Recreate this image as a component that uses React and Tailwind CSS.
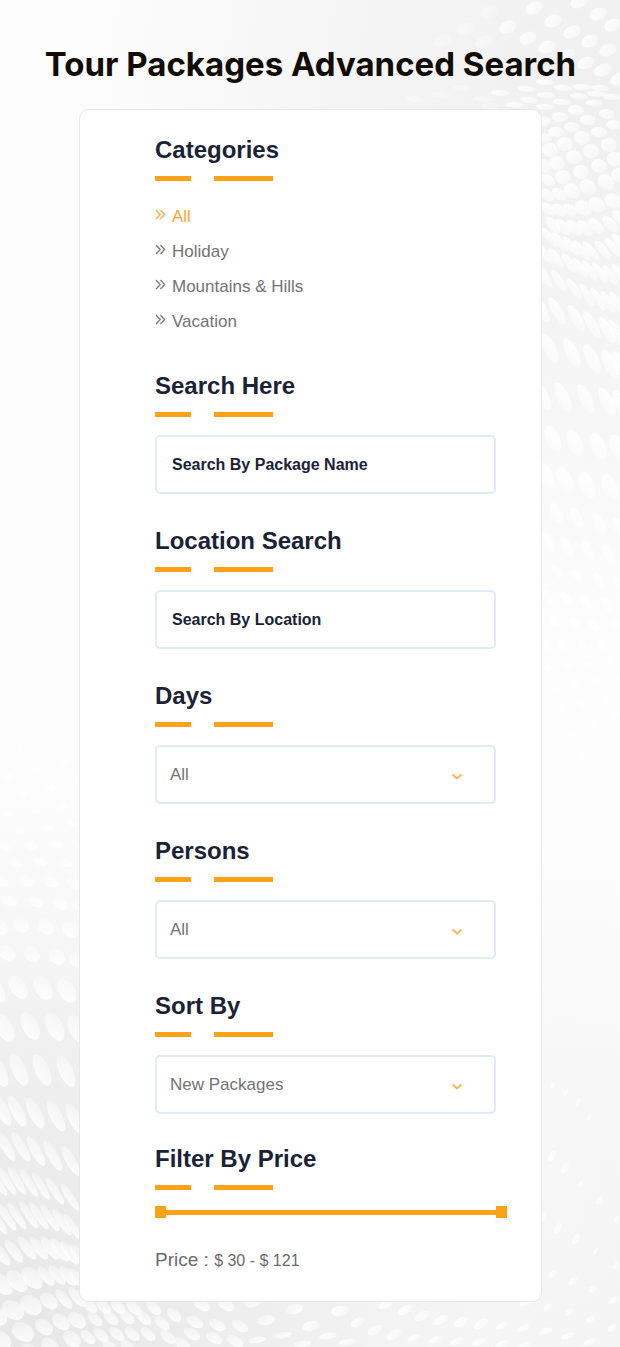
import { useState } from "react";

// each group shares one ellipse shape: rx, ry, rotation, then its points
const DOTS = [
  { rx: 9, ry: 6, rot: -22, points: [[534, 8], [579, 2], [598, 14], [613, 25], [553, 21], [572, 32], [590, 41], [608, 50], [508, 27], [528, 38], [547, 47], [567, 55], [586, 63], [603, 70], [619, 79], [489, 12], [465, 29], [484, 42], [442, 41]] },
  { rx: 9, ry: 3, rot: 4, points: [[545, 82], [563, 88], [582, 87], [600, 88], [527, 89], [546, 95], [579, 96], [596, 94], [612, 97], [529, 100], [562, 102], [594, 103], [515, 105], [545, 107], [500, 93], [482, 99], [462, 88], [440, 95], [415, 99], [490, 106]] },
  { rx: 8, ry: 5, rot: 5, points: [[576, 110], [607, 114], [560, 117], [588, 120], [572, 127], [614, 125], [556, 132], [599, 132], [543, 121], [544, 138]] },
  { rx: 8, ry: 7, rot: 15, points: [[550, 150], [565, 144], [582, 138], [609, 145], [591, 151], [574, 157], [557, 163], [599, 166], [615, 159], [581, 172], [563, 177], [543, 166], [619, 175]] },
  { rx: 9, ry: 7, rot: 35, points: [[606, 182], [588, 187], [572, 191], [613, 201], [597, 205], [583, 208]] },
  { rx: 8, ry: 5, rot: 38, points: [[548, 180], [559, 194], [547, 195], [570, 210], [559, 210], [548, 209]] },
  { rx: 10, ry: 5, rot: 47, points: [[610, 224], [596, 226], [585, 228], [574, 228], [563, 227], [553, 225], [620, 218]] },
  { rx: 12, ry: 4, rot: 50, points: [[613, 247], [603, 250], [591, 251], [581, 250], [571, 246], [560, 242], [549, 237], [620, 243]] },
  { rx: 12, ry: 4, rot: 55, points: [[619, 274], [610, 275], [600, 273], [590, 271], [580, 268], [569, 263], [556, 258], [545, 254]] },
  { rx: 13, ry: 4, rot: 58, points: [[617, 303], [608, 302], [598, 299], [587, 295], [574, 289], [559, 281], [544, 276]] },
  { rx: 15, ry: 5, rot: 60, points: [[616, 333], [607, 330], [592, 325], [576, 318], [557, 311], [541, 309]] },
  { rx: 16, ry: 6, rot: 64, points: [[610, 364], [592, 359], [572, 353], [550, 349], [607, 402], [586, 399], [563, 397], [542, 395], [621, 366], [621, 405]] },
  { rx: 14, ry: 7, rot: 66, points: [[553, 439], [575, 443], [598, 446], [618, 448], [546, 476], [565, 480], [587, 485], [610, 487]] },
  { rx: 11, ry: 5, rot: 62, points: [[556, 513], [577, 518], [599, 523], [619, 527], [548, 542], [567, 547], [588, 551], [609, 555]] },
  { rx: 8, ry: 4, rot: 55, points: [[557, 572], [577, 576], [598, 580], [618, 582], [548, 596], [566, 599], [586, 602], [607, 605]] },
  { rx: 6, ry: 4, rot: 45, points: [[555, 622], [574, 623], [594, 625], [616, 626], [545, 646], [562, 645], [582, 645], [603, 645]] },
  { rx: 4, ry: 3, rot: 10, points: [[550, 668], [568, 666], [589, 664], [611, 662], [556, 690], [575, 685], [597, 681], [619, 678], [562, 711], [584, 705], [607, 699], [571, 733], [594, 724], [618, 715]] },
  { rx: 2, ry: 2, rot: 0, points: [[550, 744], [582, 755], [607, 743], [4, 725], [20, 749], [48, 739]] },

  { rx: 5, ry: 3, rot: 8, points: [[8, 776], [36, 770], [63, 761], [22, 794], [50, 788], [7, 814], [36, 811], [62, 806], [77, 780], [20, 830], [47, 828], [72, 824]] },
  { rx: 7, ry: 4, rot: 15, points: [[5, 847], [31, 846], [57, 844], [78, 844], [15, 863], [41, 862], [66, 863]] },
  { rx: 8, ry: 5, rot: 25, points: [[1, 881], [26, 881], [51, 882], [74, 884], [10, 901], [36, 902], [60, 904], [79, 905]] },
  { rx: 9, ry: 7, rot: 40, points: [[0, 927], [21, 925], [46, 927], [70, 930], [7, 953], [32, 954], [57, 957], [77, 960]] },
  { rx: 13, ry: 8, rot: 58, points: [[-4, 991], [18, 987], [43, 988], [67, 991]] },
  { rx: 15, ry: 8, rot: 64, points: [[5, 1028], [30, 1026], [55, 1027], [77, 1029]] },
  { rx: 17, ry: 7, rot: 66, points: [[-1, 1071], [19, 1070], [42, 1070], [66, 1071]] },
  { rx: 17, ry: 6, rot: 63, points: [[2, 1110], [17, 1111], [35, 1113], [56, 1116], [75, 1119]] },
  { rx: 17, ry: 5, rot: 60, points: [[6, 1146], [21, 1147], [36, 1151], [53, 1156], [71, 1161]] },
  { rx: 16, ry: 4, rot: 58, points: [[-2, 1182], [7, 1181], [17, 1181], [29, 1183], [41, 1186], [55, 1191], [70, 1197]] },
  { rx: 16, ry: 4, rot: 56, points: [[-2, 1221], [7, 1217], [17, 1216], [29, 1215], [39, 1216], [50, 1218], [62, 1222], [73, 1227]] },
  { rx: 14, ry: 5, rot: 53, points: [[1, 1254], [14, 1251], [27, 1248], [39, 1248], [50, 1248], [60, 1250], [70, 1253], [79, 1256]] },
  { rx: 13, ry: 8, rot: 48, points: [[2, 1284], [17, 1281], [32, 1278]] },
  { rx: 12, ry: 5, rot: 50, points: [[46, 1276], [57, 1275], [68, 1276], [77, 1278], [64, 1299], [77, 1297]] },
  { rx: 12, ry: 9, rot: 35, points: [[13, 1310], [31, 1305], [-4, 1316], [23, 1332], [0, 1340]] },
  { rx: 10, ry: 7, rot: 40, points: [[49, 1301], [44, 1327], [61, 1322], [77, 1320], [72, 1339], [50, 1346], [30, 1352]] },
  { rx: 9, ry: 5, rot: 42, points: [[90, 1306], [104, 1307], [118, 1307], [134, 1308], [154, 1308], [174, 1315], [95, 1319], [111, 1318], [127, 1317], [144, 1318], [162, 1323], [88, 1337], [101, 1335], [117, 1334], [132, 1334], [148, 1334], [168, 1337], [110, 1347], [128, 1347]] },
  { rx: 9, ry: 5, rot: 30, points: [[202, 1305], [226, 1305], [195, 1322], [217, 1325], [240, 1326], [192, 1334], [214, 1338], [235, 1341], [182, 1344]] },
  { rx: 9, ry: 5, rot: -10, points: [[294, 1309], [340, 1311], [266, 1320], [311, 1326], [252, 1302]] },
  { rx: 9, ry: 3, rot: -8, points: [[283, 1335], [328, 1336], [257, 1340], [302, 1344], [348, 1342]] },
  { rx: 8, ry: 4, rot: -30, points: [[358, 1322], [405, 1310], [422, 1316], [375, 1330], [441, 1320], [461, 1322], [481, 1324], [394, 1335], [386, 1304]] },
  { rx: 7, ry: 3, rot: -20, points: [[502, 1326], [524, 1328], [546, 1331], [568, 1336], [414, 1338], [435, 1340], [457, 1341], [479, 1342], [502, 1344], [524, 1346], [590, 1342], [526, 1303]] },
  { rx: 5, ry: 3, rot: -35, points: [[553, 1274], [573, 1281], [593, 1289], [614, 1300], [548, 1307], [569, 1312], [591, 1319], [612, 1328]] },
  { rx: 6, ry: 3, rot: -60, points: [[552, 1156], [565, 1168], [543, 1217], [558, 1228], [576, 1239]] },
  { rx: 4, ry: 2, rot: -62, points: [[553, 1085], [566, 1092], [578, 1102], [589, 1117], [581, 1184], [599, 1201], [617, 1219], [596, 1251], [616, 1265]] },
];

const CATEGORIES = ["All", "Holiday", "Mountains & Hills", "Vacation"];

function Backdrop() {
  return (
    <svg
      className="absolute inset-0 h-full w-full"
      viewBox="0 0 620 1347"
      preserveAspectRatio="xMidYMid slice"
      aria-hidden="true"
    >
      <defs>
        <linearGradient id="dot" x1="0" y1="0.2" x2="1" y2="0.8">
          <stop offset="0" stopColor="#fff" />
          <stop offset="1" stopColor="#fff" stopOpacity="0.45" />
        </linearGradient>
        <linearGradient id="dotLeft" x1="1" y1="0.9" x2="0" y2="0.1">
          <stop offset="0" stopColor="#fff" />
          <stop offset="1" stopColor="#fff" stopOpacity="0.35" />
        </linearGradient>
        <radialGradient id="topRight" gradientUnits="userSpaceOnUse" cx="620" cy="90" r="660">
          <stop offset="0" stopColor="#efefef" />
          <stop offset="0.5" stopColor="#f6f6f6" />
          <stop offset="1" stopColor="#fcfcfc" stopOpacity="0" />
        </radialGradient>
        <radialGradient id="bottomLeft" gradientUnits="userSpaceOnUse" cx="0" cy="1347" r="640">
          <stop offset="0" stopColor="#e6e6e6" />
          <stop offset="0.5" stopColor="#f0f0f0" />
          <stop offset="1" stopColor="#fbfbfb" stopOpacity="0" />
        </radialGradient>
        <radialGradient id="bottomRight" gradientUnits="userSpaceOnUse" cx="560" cy="1347" r="620">
          <stop offset="0" stopColor="#f3f3f3" />
          <stop offset="0.4" stopColor="#f6f6f6" />
          <stop offset="1" stopColor="#fbfbfb" stopOpacity="0" />
        </radialGradient>
      </defs>
      <rect width="620" height="1347" fill="#fdfdfd" />
      <rect width="620" height="1347" fill="url(#topRight)" />
      <rect width="620" height="1347" fill="url(#bottomRight)" />
      <rect width="620" height="1347" fill="url(#bottomLeft)" />
      {DOTS.map((group) =>
        group.points.map(([x, y]) => (
          <ellipse
            key={`${x}-${y}`}
            rx={group.rx}
            ry={group.ry}
            transform={`translate(${x} ${y}) rotate(${group.rot})`}
            fill={x < 310 ? "url(#dotLeft)" : "url(#dot)"}
            opacity={x < 500 && y < 120 ? 0.4 : 0.9}
          />
        ))
      )}
    </svg>
  );
}

function Heading({ htmlFor, children }) {
  return (
    <div>
      <h2 className="text-[24px] leading-7 font-bold text-[#1b2236]">
        {htmlFor ? <label htmlFor={htmlFor}>{children}</label> : children}
      </h2>
      <div className="mt-3 flex gap-[23px]">
        <span className="h-[5px] w-9 bg-[#ffa21a]" />
        <span className="h-[5px] w-[59px] bg-[#ffa21a]" />
      </div>
    </div>
  );
}

function TextField({ id, title, placeholder }) {
  const [value, setValue] = useState("");

  return (
    <section>
      <Heading htmlFor={id}>{title}</Heading>
      <div className="mt-[18px] mr-[11px]">
        <input
          id={id}
          type="text"
          value={value}
          onChange={(e) => setValue(e.target.value)}
          placeholder={placeholder}
          className="block h-[59px] w-full rounded-[5px] border-2 border-[#e1ebf6] bg-white px-[15px] text-[16px] font-bold text-[#1b2236] outline-none placeholder:text-[#1b2236] placeholder:opacity-100"
        />
      </div>
    </section>
  );
}

function SelectField({ id, title, options }) {
  const [value, setValue] = useState(options[0]);

  return (
    <section>
      <Heading htmlFor={id}>{title}</Heading>
      <div className="relative mt-[18px] mr-[11px]">
        <select
          id={id}
          value={value}
          onChange={(e) => setValue(e.target.value)}
          className="block h-[59px] w-full appearance-none rounded-[5px] border-2 border-[#e1ebf6] bg-white px-[13px] text-[17px] text-[#737373] outline-none"
        >
          {options.map((option) => (
            <option key={option}>{option}</option>
          ))}
        </select>
        <svg
          className="pointer-events-none absolute top-7 right-[33px] h-2 w-3"
          viewBox="0 0 12 8"
          fill="none"
          stroke="#ffb45c"
          strokeWidth="2"
          aria-hidden="true"
        >
          <path d="M1.5 1.5 6 5.5l4.5-4" />
        </svg>
      </div>
    </section>
  );
}

function PriceFilter() {
  const min = 30;
  const max = 121;
  const [low, setLow] = useState(min);
  const [high, setHigh] = useState(max);
  const thumb =
    "pointer-events-none absolute inset-0 h-3 w-full appearance-none bg-transparent outline-none [&::-webkit-slider-thumb]:pointer-events-auto [&::-webkit-slider-thumb]:h-3 [&::-webkit-slider-thumb]:w-[11px] [&::-webkit-slider-thumb]:appearance-none [&::-webkit-slider-thumb]:bg-[#ffa21a]";

  return (
    <section className="-mt-0.5">
      <Heading>Filter By Price</Heading>
      <div className="relative mt-4 flex h-3 items-center">
        <div className="h-[5px] w-full bg-[#ffa21a]" />
        <input
          type="range"
          aria-label="Minimum price"
          min={min}
          max={max}
          value={low}
          onChange={(e) => setLow(Math.min(Number(e.target.value), high))}
          className={thumb}
        />
        <input
          type="range"
          aria-label="Maximum price"
          min={min}
          max={max}
          value={high}
          onChange={(e) => setHigh(Math.max(Number(e.target.value), low))}
          className={thumb}
        />
      </div>
      <p className="mt-7 text-[16px] leading-7 text-[#6b6b6b]">
        <span className="text-[19px]">Price : </span>$ {low} - $ {high}
      </p>
    </section>
  );
}

export default function App() {
  const [category, setCategory] = useState("All");

  return (
    <div className="relative min-h-screen overflow-hidden bg-[#fdfdfd] font-['Liberation_Sans',Arial,sans-serif]">
      <Backdrop />
      <main className="relative pt-11 pr-[78px] pb-11 pl-[79px]">
        <h1 className="-mx-16 text-center font-[Inter,sans-serif] text-[33px] leading-10 font-bold whitespace-nowrap text-[#120c06]">
          Tour Packages Advanced Search
        </h1>

        <div className="mt-[25px] flex flex-col gap-[33px] rounded-[10px] border border-[#e8e8e8] bg-white pt-[26px] pr-[34px] pb-[26px] pl-[75px]">
          <section>
            <Heading>Categories</Heading>
            <ul className="mt-[18px]">
              {CATEGORIES.map((name) => (
                <li key={name} className="h-[35px]">
                  <button
                    type="button"
                    onClick={() => setCategory(name)}
                    className={`flex gap-[6px] text-[17px] leading-[35px] ${
                      category === name ? "text-[#ffa43a]" : "text-[#737373]"
                    }`}
                  >
                    <svg
                      className="mt-[10px] h-[11px] w-[11px] opacity-90"
                      viewBox="0 0 11 11"
                      fill="none"
                      stroke="currentColor"
                      strokeWidth="1.4"
                      aria-hidden="true"
                    >
                      <path d="M1 1l4.2 4.5L1 10M5.4 1l4.2 4.5L5.4 10" />
                    </svg>
                    {name}
                  </button>
                </li>
              ))}
            </ul>
          </section>

          <TextField id="package" title="Search Here" placeholder="Search By Package Name" />
          <TextField id="location" title="Location Search" placeholder="Search By Location" />
          <SelectField id="days" title="Days" options={["All", "1 - 3", "4 - 7", "8+"]} />
          <SelectField id="persons" title="Persons" options={["All", "1", "2", "3", "4+"]} />
          <SelectField id="sort" title="Sort By" options={["New Packages", "Old Packages"]} />
          <PriceFilter />
        </div>
      </main>
    </div>
  );
}
